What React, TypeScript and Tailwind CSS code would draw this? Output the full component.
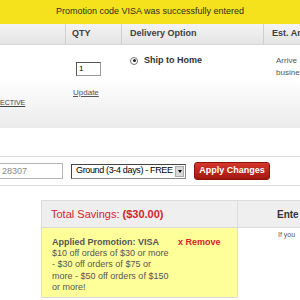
import React from 'react';

export default function App() {
  return (
    <div className="w-[300px] h-[300px] overflow-hidden bg-white font-['Liberation_Sans',Arial,sans-serif] text-[#333]">
      {/* promo banner */}
      <div className="h-[24px] bg-[#f6e21c] flex items-center justify-center text-[9px] text-[#2e2e22] whitespace-nowrap">
        Promotion code VISA was successfully entered
      </div>

      {/* cart table header */}
      <div className="h-[21px] flex bg-gradient-to-b from-[#f4f4f4] to-[#e4e4e4] border-b border-[#d8d8d8] text-[9px] font-bold text-[#404040] whitespace-nowrap">
        <div className="w-[65px] shrink-0" />
        <div className="w-[56px] shrink-0 border-l border-[#cfcfcf] pl-[6px] flex items-center">QTY</div>
        <div className="w-[142px] shrink-0 border-l border-[#cfcfcf] pl-[8px] flex items-center">Delivery Option</div>
        <div className="flex-1 border-l border-[#cfcfcf] pl-[8px] flex items-center">Est. Ar</div>
      </div>

      {/* item row */}
      <div className="h-[83px] flex bg-gradient-to-b from-white from-40% to-[#ebebeb]">
        <div className="w-[65px] shrink-0 pt-[43px]">
          <span className="text-[7px] text-[#444] underline whitespace-nowrap">ECTIVE</span>
        </div>
        <div className="w-[56px] shrink-0 flex flex-col">
          <div className="ml-[11px] mt-[17px] w-[25px] h-[14px] border border-[#999] border-t-[#555] border-l-[#555] bg-white text-[8px] leading-[12px] pl-[2px] text-black">
            1
          </div>
          <span className="ml-[8px] mt-[11px] text-[8px] text-[#555] underline">Update</span>
        </div>
        <div className="w-[142px] shrink-0 pl-[9px] pt-[9px]">
          <div className="flex items-center gap-[6px]">
            <span className="w-[8px] h-[8px] rounded-full border border-[#777] bg-white flex items-center justify-center">
              <span className="w-[3px] h-[3px] rounded-full bg-[#222]" />
            </span>
            <span className="text-[9px] font-bold text-[#333]">Ship to Home</span>
          </div>
        </div>
        <div className="flex-1 pl-[13px] pt-[10px] text-[8px] leading-[12px] text-[#555] whitespace-nowrap">
          <div>Arrive</div>
          <div>busine</div>
        </div>
      </div>

      <div className="h-[28px]" />

      {/* zip / shipping row */}
      <div className="h-[30px] border-t border-b border-[#dcdcdc] flex items-center">
        <div className="-ml-[3px] w-[66px] h-[16px] border border-[#b5b5b5] bg-white text-[9px] leading-[14px] pl-[4px] text-[#888]">
          28307
        </div>
        <div className="ml-[8px] w-[115px] h-[15px] border border-[#888] border-t-[#444] border-l-[#444] bg-white flex items-center">
          <span className="flex-1 pl-[4px] text-[9px] tracking-[-0.35px] text-black whitespace-nowrap">Ground (3-4 days) - FREE</span>
          <span className="w-[9px] h-[11px] mr-[1px] bg-[#d8d8d8] border border-[#aaa] flex items-center justify-center">
            <span className="w-0 h-0 border-l-[2.5px] border-r-[2.5px] border-t-[3px] border-l-transparent border-r-transparent border-t-black" />
          </span>
        </div>
        <button className="ml-[8px] w-[76px] h-[18px] rounded-[3px] bg-gradient-to-b from-[#d4372b] to-[#a3160f] border border-[#8e1209] text-white text-[9px] font-bold whitespace-nowrap">
          Apply Changes
        </button>
      </div>

      <div className="h-[14px]" />

      {/* savings section */}
      <div className="flex pl-[41px]">
        <div className="w-[196px] shrink-0">
          <div className="h-[28px] bg-[#efefef] border-l border-t border-b border-[#dcdcdc] pl-[9px] flex items-center text-[11px] text-[#d8222b] whitespace-nowrap">
            Total Savings:&nbsp;<span className="font-bold">($30.00)</span>
          </div>
          <div className="h-[70px] bg-[#ffff99] border-l border-b border-[#dcdcdc] pl-[10px] pt-[9px] flex text-[9px] leading-[11.2px] text-[#555]">
            <div className="w-[120px] shrink-0">
              <div className="font-bold whitespace-nowrap">Applied Promotion: VISA</div>
              <div>$10 off orders of $30 or more - $30 off orders of $75 or more - $50 off orders of $150 or more!</div>
            </div>
            <span className="ml-[6px] font-bold text-[#d8222b] whitespace-nowrap">x Remove</span>
          </div>
        </div>
        <div className="flex-1 border-l border-[#dcdcdc]">
          <div className="h-[28px] bg-[#efefef] border-t border-b border-[#dcdcdc] pl-[39px] flex items-center text-[10px] font-bold text-[#333] whitespace-nowrap">
            Ente
          </div>
          <div className="pl-[40px] pt-[2px] text-[7px] text-[#555] whitespace-nowrap">If you</div>
        </div>
      </div>
    </div>
  );
}
